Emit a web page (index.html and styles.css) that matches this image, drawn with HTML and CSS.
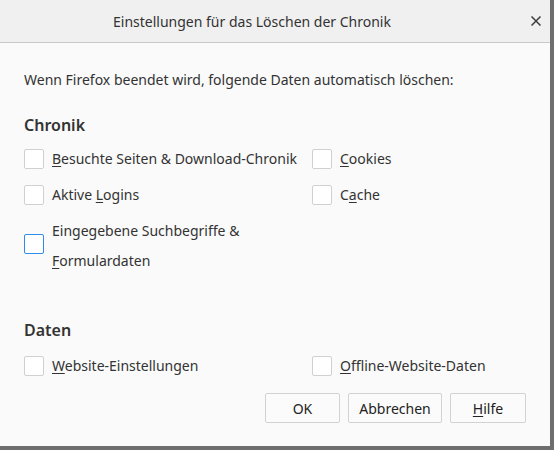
FILE: index.html
```html
<!DOCTYPE html>
<html lang="de">
<head>
<meta charset="utf-8">
<title>Einstellungen für das Löschen der Chronik</title>
<link rel="stylesheet" href="styles.css">
</head>
<body>
<div class="dialog">
  <div class="titlebar">
    <span class="title">Einstellungen für das Löschen der Chronik</span>
    <svg class="close" width="10" height="10" viewBox="0 0 10 10"><path d="M0.5 0.5 L9.5 9.5 M9.5 0.5 L0.5 9.5" stroke="#3c3c3c" stroke-width="1.5" fill="none"/></svg>
  </div>
  <div class="content">
    <p class="intro">Wenn Firefox beendet wird, folgende Daten automatisch löschen:</p>
    <h2 class="heading">Chronik</h2>
    <div class="grid">
      <label class="check"><span class="box"></span><span class="text"><u>B</u>esuchte Seiten &amp; Download-Chronik</span></label>
      <label class="check"><span class="box"></span><span class="text"><u>C</u>ookies</span></label>
      <label class="check"><span class="box"></span><span class="text">Aktive <u>L</u>ogins</span></label>
      <label class="check"><span class="box"></span><span class="text">C<u>a</u>che</span></label>
      <label class="check wrap"><span class="box focus"></span><span class="text">Eingegebene Suchbegriffe &amp; <u>F</u>ormulardaten</span></label>
    </div>
    <h2 class="heading daten">Daten</h2>
    <div class="grid">
      <label class="check"><span class="box"></span><span class="text"><u>W</u>ebsite-Einstellungen</span></label>
      <label class="check"><span class="box"></span><span class="text"><u>O</u>ffline-Website-Daten</span></label>
    </div>
    <div class="buttons">
      <button class="btn ok">OK</button>
      <button class="btn cancel">Abbrechen</button>
      <button class="btn help"><u>H</u>ilfe</button>
    </div>
  </div>
</div>
</body>
</html>
```

FILE: styles.css
```css
html, body {
  margin: 0;
  padding: 0;
  background: #fafafa;
}
body {
  font-family: "Noto Sans", "Open Sans", sans-serif;
  color: #333;
}
.dialog {
  width: 550px;
  height: 446px;
  border-right: 4px solid #6e6e6e;
  border-bottom: 4px solid #6e6e6e;
  background: #fafafa;
  display: flex;
  flex-direction: column;
}
.titlebar {
  height: 42px;
  background: #f0f0f0;
  border-bottom: 1px solid #c9c9c9;
  display: flex;
  align-items: center;
  justify-content: center;
  padding-right: 46px;
  position: relative;
  flex-shrink: 0;
}
.title {
  font-size: 14px;
  color: #333;
}
.close {
  position: absolute;
  right: 9px;
  top: 16px;
}
.content {
  padding: 0 24px;
  display: flex;
  flex-direction: column;
}
.intro {
  margin: 22px 0 0;
  font-size: 14px;
  line-height: 30px;
}
.heading {
  margin: 15px 0 0;
  font-size: 16px;
  font-weight: 600;
  line-height: 30px;
  color: #333;
}
.heading.daten {
  margin-top: 39px;
}
.grid {
  display: grid;
  grid-template-columns: 288px 1fr;
  row-gap: 6px;
  margin-top: 4px;
}
.daten + .grid {
  margin-top: 6px;
}
.check {
  display: flex;
  align-items: center;
  font-size: 14px;
  line-height: 30px;
}
.check.wrap .text {
  max-width: 250px;
}
.check.wrap .box {
  margin-bottom: 5px;
}
.box {
  width: 18px;
  height: 18px;
  border: 1px solid #d0d0d0;
  border-radius: 2px;
  background: #fff;
  margin-right: 8px;
  flex-shrink: 0;
}
.box.focus {
  border-color: #2f8ae8;
}
u {
  text-underline-offset: 2px;
}
.buttons {
  display: flex;
  justify-content: flex-end;
  gap: 8px;
  margin-top: 12px;
}
.btn {
  height: 30px;
  font-family: "Noto Sans", "Open Sans", sans-serif;
  font-size: 14px;
  color: #222;
  background: #fbfbfb;
  border: 1px solid #d2d2d2;
  border-radius: 2px;
  padding: 0;
}
.btn.ok { width: 75px; }
.btn.cancel { width: 94px; }
.btn.help { width: 76px; }
```
